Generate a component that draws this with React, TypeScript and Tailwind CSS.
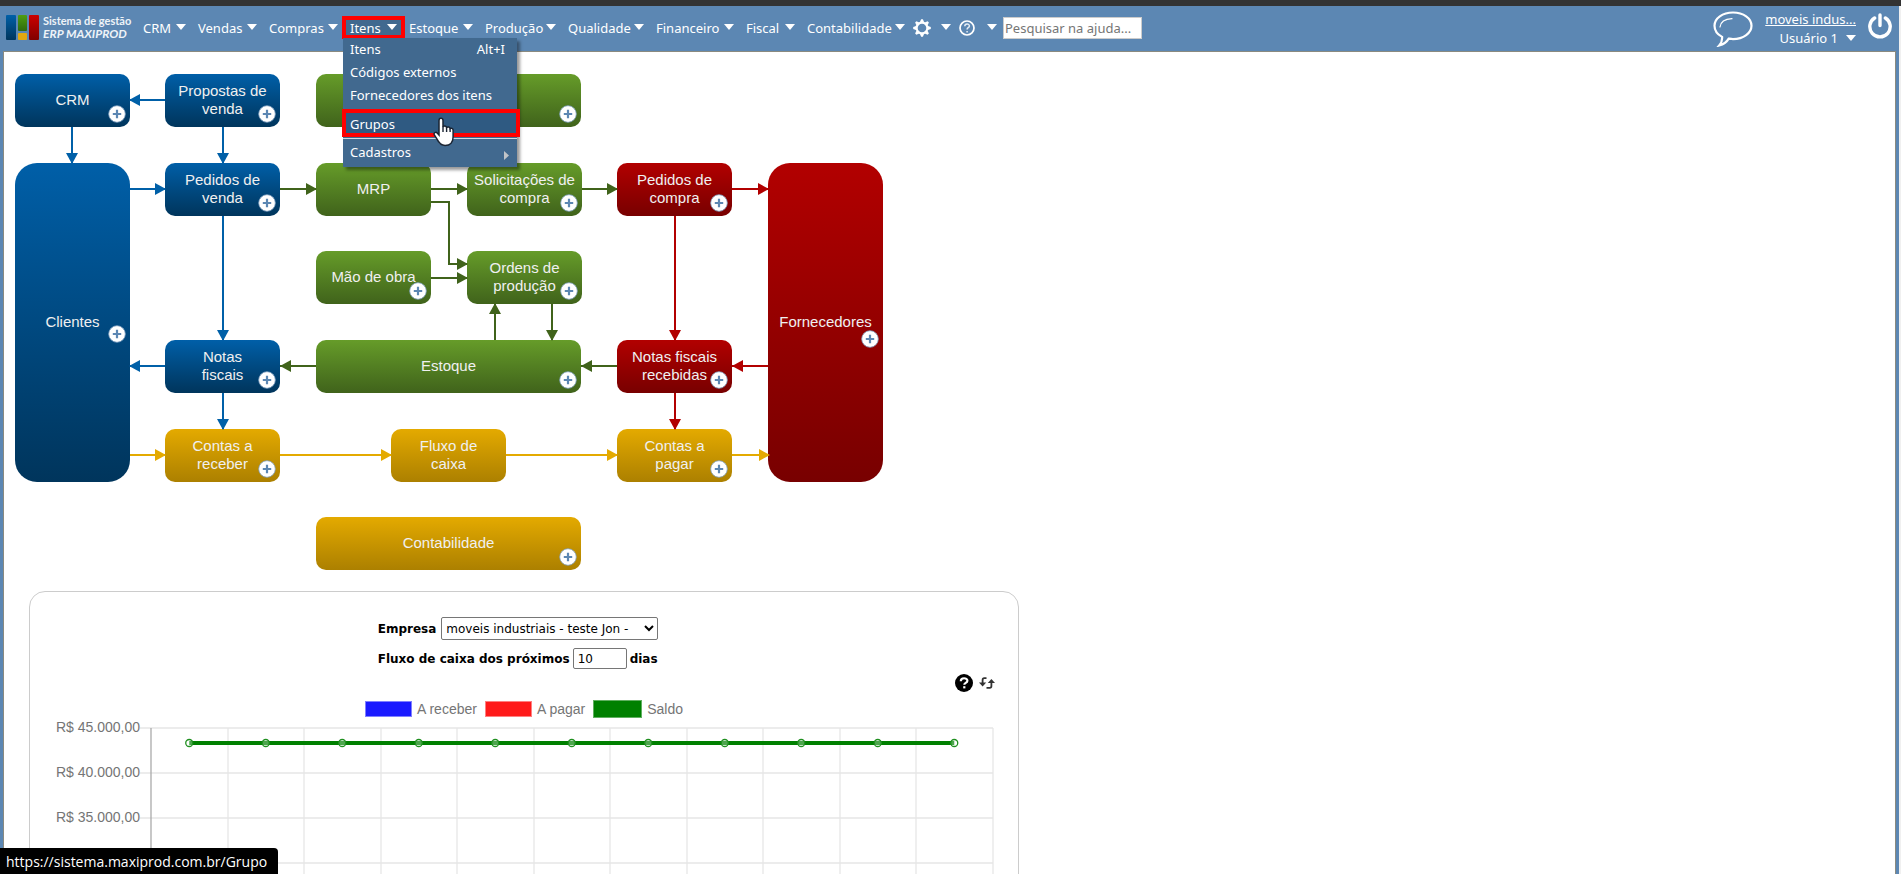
import { useState } from "react";
import clsx from "clsx";

type Tone = "blue" | "green" | "red" | "yellow";

const tones: Record<Tone, string> = {
  blue: "from-[#005fa8] to-[#00355c]",
  green: "from-[#669c29] to-[#40631b]",
  red: "from-[#b20000] to-[#780000]",
  yellow: "from-[#e4aa00] to-[#ac8000]",
};

const lines: Record<Tone, string> = {
  blue: "#0060a8",
  green: "#40631b",
  red: "#b20000",
  yellow: "#e4aa00",
};

const menus = [
  { label: "CRM", width: "w-[43px]" },
  { label: "Vendas", width: "w-[59px]" },
  { label: "Compras", width: "w-[69px]" },
  { label: "Itens", width: "w-[47px]" },
  { label: "Estoque", width: "w-[64px]" },
  { label: "Produção", width: "w-[71px]" },
  { label: "Qualidade", width: "w-[76px]" },
  { label: "Financeiro", width: "w-[78px]" },
  { label: "Fiscal", width: "w-[49px]" },
  { label: "Contabilidade", width: "w-[98px]" },
];

type FlowNode = {
  label: string[];
  tone: Tone;
  x: number;
  y: number;
  w?: number;
  h?: number;
  plus?: boolean;
};

const nodes: FlowNode[] = [
  { label: ["CRM"], tone: "blue", x: 11, y: 22, plus: true },
  { label: ["Propostas de", "venda"], tone: "blue", x: 161, y: 22, plus: true },
  { label: [], tone: "green", x: 312, y: 22, w: 265, plus: true },
  { label: ["Clientes"], tone: "blue", x: 11, y: 111, h: 319, plus: true },
  { label: ["Pedidos de", "venda"], tone: "blue", x: 161, y: 111, plus: true },
  { label: ["MRP"], tone: "green", x: 312, y: 111 },
  { label: ["Solicitações de", "compra"], tone: "green", x: 463, y: 111, plus: true },
  { label: ["Pedidos de", "compra"], tone: "red", x: 613, y: 111, plus: true },
  { label: ["Fornecedores"], tone: "red", x: 764, y: 111, h: 319, plus: true },
  { label: ["Mão de obra"], tone: "green", x: 312, y: 199, plus: true },
  { label: ["Ordens de", "produção"], tone: "green", x: 463, y: 199, plus: true },
  { label: ["Notas", "fiscais"], tone: "blue", x: 161, y: 288, plus: true },
  { label: ["Estoque"], tone: "green", x: 312, y: 288, w: 265, plus: true },
  { label: ["Notas fiscais", "recebidas"], tone: "red", x: 613, y: 288, plus: true },
  { label: ["Contas a", "receber"], tone: "yellow", x: 161, y: 377, plus: true },
  { label: ["Fluxo de", "caixa"], tone: "yellow", x: 387, y: 377 },
  { label: ["Contas a", "pagar"], tone: "yellow", x: 613, y: 377, plus: true },
  { label: ["Contabilidade"], tone: "yellow", x: 312, y: 465, w: 265, plus: true },
];

type Connector = { tone: Tone; points: [number, number][] };

const connectors: Connector[] = [
  { tone: "blue", points: [[161, 48], [125, 48]] },
  { tone: "blue", points: [[68, 75], [68, 112]] },
  { tone: "blue", points: [[219, 75], [219, 112]] },
  { tone: "blue", points: [[125, 137], [162, 137]] },
  { tone: "blue", points: [[219, 164], [219, 289]] },
  { tone: "blue", points: [[161, 314], [125, 314]] },
  { tone: "blue", points: [[219, 341], [219, 378]] },
  { tone: "green", points: [[276, 137], [313, 137]] },
  { tone: "green", points: [[427, 137], [464, 137]] },
  { tone: "green", points: [[577, 137], [614, 137]] },
  { tone: "green", points: [[427, 150], [445, 150], [445, 212], [464, 212]] },
  { tone: "green", points: [[427, 226], [464, 226]] },
  { tone: "green", points: [[491, 288], [491, 251]] },
  { tone: "green", points: [[548, 252], [548, 289]] },
  { tone: "green", points: [[613, 314], [577, 314]] },
  { tone: "green", points: [[312, 314], [276, 314]] },
  { tone: "red", points: [[728, 137], [765, 137]] },
  { tone: "red", points: [[671, 164], [671, 289]] },
  { tone: "red", points: [[764, 314], [728, 314]] },
  { tone: "red", points: [[671, 341], [671, 378]] },
  { tone: "yellow", points: [[125, 403], [162, 403]] },
  { tone: "yellow", points: [[276, 403], [388, 403]] },
  { tone: "yellow", points: [[502, 403], [614, 403]] },
  { tone: "yellow", points: [[728, 403], [766, 403]] },
];

const axisLabels = ["R$ 45.000,00", "R$ 40.000,00", "R$ 35.000,00"];

export default function App() {
  return (
    <div className="flex h-screen flex-col overflow-hidden bg-[#f0f0f0] font-['Noto_Sans',sans-serif] text-xs text-black">
      <div className="h-[6px] shrink-0 bg-[#333333]" />
      <div className="mr-[2px] flex min-h-0 flex-1 flex-col bg-[#5c87b3]">
        <Header />
        <main className="mr-[3px] ml-[3px] min-h-0 flex-1 overflow-hidden border-x border-t border-[#8a8a80] bg-white">
          <FlowDiagram />
          <CashFlow />
        </main>
      </div>
      <div className="fixed bottom-0 left-0 rounded-tr bg-black pt-1 pr-[11px] pb-[2px] pl-[6px] font-['Open_Sans',sans-serif] text-sm leading-5 text-white">
        https://sistema.maxiprod.com.br/Grupo
      </div>
    </div>
  );
}

function Caret() {
  return (
    <svg width="10" height="6" viewBox="0 0 10 6" className="mb-[2px] shrink-0">
      <path d="M0 0h10L5 6z" fill="#fff" />
    </svg>
  );
}

function Header() {
  return (
    <header className="flex h-[45px] shrink-0 justify-between text-[13px] text-white">
      <div className="flex pt-[9px] pl-[6px]">
        <Logo />
        <nav className="ml-3 flex h-[25px] items-center gap-3">
          {menus.map((m) => (
            <div key={m.label} className={clsx("relative", m.width)}>
              {m.label === "Itens" && (
                <span className="absolute -top-[3px] -right-2 -bottom-[2px] -left-2 border-4 border-[#ff0000] bg-[#41698f]" />
              )}
              <button className="relative flex w-full items-center justify-between leading-[18px]">
                {m.label}
                <Caret />
              </button>
              {m.label === "Itens" && <ItensMenu />}
            </div>
          ))}
        </nav>
        <div className="ml-2 flex h-[26px] items-center gap-2">
          <button aria-label="Configurações" className="flex w-[38px] items-center justify-between">
            <GearIcon />
            <Caret />
          </button>
          <button aria-label="Ajuda" className="flex w-[38px] items-center justify-between">
            <svg width="16" height="16" viewBox="0 0 16 16">
              <circle cx="8" cy="8" r="7" fill="none" stroke="#fff" strokeWidth="1.7" />
              <path d="M5.8 6.3c0-3 4.6-2.9 4.6-.3 0 1.700-2.300 1.700-2.300 3.400M8.100 11v1.400" fill="none" stroke="#e4ecf4" strokeWidth="1.500" />
            </svg>
            <Caret />
          </button>
        </div>
        <input
          type="text"
          aria-label="Pesquisar na ajuda"
          placeholder="Pesquisar na ajuda..."
          className="mt-[2px] ml-[6px] h-[22px] w-[139px] border border-[#cccccc] bg-white px-px text-black placeholder:text-[#757575]"
        />
      </div>
      <div className="flex pr-[7px]">
        <svg width="40" height="36" viewBox="0 0 40 36" className="mt-[5px] mr-3">
          <path
            d="M20 1.500C9.500 1.500 1.500 7.500 1.500 14.700c0 4.800 3.200 8.800 7.600 11.200.3 3.300-.8 6.200-2.900 8.600 4.400-1.200 7.600-3.600 9.500-6.900 1.300.2 2.900.5 4.300.5 10.500 0 18.500-6.200 18.500-13.400S30.500 1.500 20 1.500z"
            fill="none"
            stroke="#fff"
            strokeWidth="2.200"
          />
          <path d="M7 16c.5-4.500 4.500-7.800 12-8.300" fill="none" stroke="#fff" strokeWidth="1.200" strokeLinecap="round" />
        </svg>
        <div className="flex flex-col items-end pt-[4px]">
          <a href="#empresa" className="leading-[19px] underline">
            moveis indus...
          </a>
          <button className="flex items-center gap-2 leading-[19px]">
            Usuário 1 <Caret />
          </button>
        </div>
        <button aria-label="Sair" className="mt-[7px] ml-3 h-[26px]">
          <svg width="24" height="26" viewBox="0 0 24 26">
            <path d="M6.600 5A10.200 10.200 0 1 0 17.400 5M12 2v10.500" fill="none" stroke="#fff" strokeWidth="3.400" strokeLinecap="round" />
          </svg>
        </button>
      </div>
    </header>
  );
}

function Logo() {
  return (
    <a href="#inicio" aria-label="ERP MAXIPROD" className="flex h-[25px] items-center gap-1 font-['Lato',sans-serif] font-bold">
      <svg width="33" height="25" viewBox="0 0 33 25">
        <defs>
          <linearGradient id="lb" x2="0" y2="1">
            <stop stopColor="#0060a8" />
            <stop offset="1" stopColor="#00355c" />
          </linearGradient>
          <linearGradient id="lg" x2="0" y2="1">
            <stop stopColor="#4f9e10" />
            <stop offset="1" stopColor="#2f6a10" />
          </linearGradient>
          <linearGradient id="lr" x2="0" y2="1">
            <stop stopColor="#cc0000" />
            <stop offset="1" stopColor="#800000" />
          </linearGradient>
        </defs>
        <rect width="10" height="25" rx="1" fill="url(#lb)" />
        <rect x="12" width="9" height="16" rx="1" fill="url(#lg)" />
        <rect x="12" y="18" width="9" height="7" rx="1" fill="#e0a810" />
        <rect x="23" width="10" height="25" rx="1" fill="url(#lr)" />
      </svg>
      <span className="flex w-[88px] flex-col whitespace-nowrap text-[#eef3f8]">
        <span className="text-[11px] leading-[12px]">Sistema de gestão</span>
        <span className="text-xs leading-[14px] italic">ERP MAXIPROD</span>
      </span>
    </a>
  );
}

function GearIcon() {
  const teeth = [0, 45, 90, 135, 180, 225, 270, 315];
  return (
    <svg width="18" height="18" viewBox="-9 -9 18 18">
      <circle r="5.400" fill="none" stroke="#fff" strokeWidth="2.200" />
      {teeth.map((a) => (
        <path key={a} d="M-2-5.900L-0.900-8.800H0.900L2-5.900z" fill="#fff" transform={`rotate(${a})`} />
      ))}
    </svg>
  );
}

function ItensMenu() {
  return (
    <div className="absolute top-[19px] -left-[7px] z-10 flex w-[174px] flex-col bg-[#41698f] pb-[1px] shadow-[3px_3px_3px_rgba(0,0,0,0.4)]">
      <MenuItem label="Itens" hint="Alt+I" />
      <MenuItem label="Códigos externos" />
      <MenuItem label="Fornecedores dos itens" />
      <div className="relative -mx-px mt-[2px] flex h-[28px] w-[178px] border-4 border-[#ff0000] bg-[#2f5a82]">
        <a href="#grupos" className="flex flex-1 items-center pt-1 pl-1">
          Grupos
        </a>
        <HandCursor />
      </div>
      <hr className="mt-px border-t border-[#d0d8e0]" />
      <a href="#cadastros" className="flex h-[27px] items-center justify-between pt-[2px] pr-2 pl-[7px]">
        Cadastros
        <svg width="5" height="9" viewBox="0 0 5 9" className="mt-1">
          <path d="M0 0l5 4.500L0 9z" fill="#c0c4c8" />
        </svg>
      </a>
    </div>
  );
}

function MenuItem({ label, hint }: { label: string; hint?: string }) {
  return (
    <a href="#item" className="flex h-[23px] items-center justify-between pr-3 pl-[7px] leading-[18px]">
      <span>{label}</span>
      {hint && <span>{hint}</span>}
    </a>
  );
}

function HandCursor() {
  return (
    <svg width="24" height="30" viewBox="0 0 24 30" className="absolute top-1 left-[85px]">
      <path
        d="M8 18V3.500C8 .6 12 .6 12 3.500V10c.6-1.400 3.400-1.200 3.600.6 1-1.200 3.300-.7 3.500.9 1.200-.8 3 0 3 1.600V20c0 5-3 8.500-8 8.500-4.500 0-6.300-2.700-8.100-6.300l-2.800-4.500c-.9-1.900 1.700-3.200 3-1.600z"
        fill="#fff"
        stroke="#1a2433"
        strokeWidth="1.500"
      />
      <path d="M12 9.500v5.500M15.600 10.500V15M19.100 11.500V15" stroke="#1a2433" strokeWidth="1.400" />
    </svg>
  );
}

function arrowHead([[x0, y0], [x1, y1]]: [number, number][]) {
  const dx = Math.sign(x1 - x0);
  const dy = Math.sign(y1 - y0);
  const bx = x1 - dx * 11;
  const by = y1 - dy * 11;
  return `M${x1} ${y1}L${bx + dy * 6} ${by + dx * 6}L${bx - dy * 6} ${by - dx * 6}z`;
}

function FlowDiagram() {
  return (
    <div className="relative h-[539px]">
      <svg width="890" height="530" viewBox="0 0 890 530">
        {connectors.map((c, i) => (
          <polyline
            key={i}
            points={c.points.map((p) => p.join(",")).join(" ")}
            fill="none"
            stroke={lines[c.tone]}
            strokeWidth="2"
          />
        ))}
      </svg>
      {nodes.map((n, i) => (
        <FlowBox key={i} node={n} />
      ))}
      {/* heads sit above the boxes so the tips touch them */}
      <svg width="890" height="530" viewBox="0 0 890 530" className="pointer-events-none absolute top-0 left-0">
        {connectors.map((c, i) => (
          <path key={i} d={arrowHead(c.points.slice(-2))} fill={lines[c.tone]} />
        ))}
      </svg>
    </div>
  );
}

function FlowBox({ node }: { node: FlowNode }) {
  const { label, tone, x, y, w = 115, h = 53, plus } = node;
  const tall = h > 53;
  return (
    <button
      className={clsx(
        "absolute flex flex-col items-center justify-center bg-linear-to-b pb-[2px] font-['Liberation_Sans',sans-serif] text-[15px] leading-[18px] whitespace-nowrap text-[#f0f0f0]",
        tall ? "rounded-[22px]" : "rounded-[10px]",
        tones[tone],
      )}
      style={{ left: x, top: y, width: w, height: h }}
    >
      {label.map((line) => (
        <span key={line}>{line}</span>
      ))}
      {plus && (
        <svg
          width="18"
          height="18"
          viewBox="0 0 18 18"
          className={clsx(
            "absolute right-[4px]",
            !tall && "bottom-[4px]",
            tall && (tone === "red" ? "top-[167px]" : "top-[162px]"),
          )}
        >
          <circle cx="9" cy="9" r="8.300" fill="#fff" stroke="#7f9fc0" strokeWidth="0.800" />
          <path d="M9 4.800v8.400M4.800 9h8.400" stroke="#5c87b3" strokeWidth="2.200" />
        </svg>
      )}
    </button>
  );
}

function CashFlow() {
  const [days, setDays] = useState("10");
  return (
    <section className="ml-[25px] w-[990px] rounded-t-2xl border border-[#cccccc] pt-[25px] font-['DejaVu_Sans',sans-serif]">
      <div className="flex justify-center pr-3">
        <div className="flex flex-col gap-2 font-bold">
          <div className="flex items-center gap-[5px]">
            <label htmlFor="empresa">Empresa</label>
            <select
              id="empresa"
              className="h-[23px] w-[217px] rounded-[2px] border border-[#767676] bg-white font-normal"
            >
              <option>moveis industriais - teste Jon -</option>
            </select>
          </div>
          <div className="flex items-center gap-[3px]">
            <label htmlFor="dias">Fluxo de caixa dos próximos</label>
            <input
              id="dias"
              value={days}
              onChange={(e) => setDays(e.target.value)}
              className="h-[21px] w-[54px] rounded-[2px] border border-[#767676] px-1 font-normal"
            />
            <span>dias</span>
          </div>
        </div>
      </div>
      <div className="mt-[5px] flex items-center justify-end gap-[6px] pr-[23px]">
        <button aria-label="Ajuda">
          <svg width="18" height="18" viewBox="0 0 18 18" className="block">
            <circle cx="9" cy="9" r="9" fill="#000" />
            <path d="M5.800 7.200c0-4 6.600-3.700 6.600-.4 0 2.200-3.100 2-3.100 4" fill="none" stroke="#fff" strokeWidth="2.200" />
            <path d="M8.200 12.200h2.200v2.200H8.200z" fill="#fff" />
          </svg>
        </button>
        <button aria-label="Atualizar">
          <svg width="16" height="12" viewBox="0 0 16 12" className="block">
            <path d="M7.500 1.200H5.200Q3.600 1.200 3.600 3v3" fill="none" stroke="#333" strokeWidth="1.800" />
            <path d="M0 5.500h7.200L3.600 9.500z" fill="#333" />
            <path d="M7.500 10.800h3.300q1.600 0 1.600-1.800V6" fill="none" stroke="#333" strokeWidth="1.800" />
            <path d="M8.800 6H16l-3.600-4z" fill="#333" />
          </svg>
        </button>
      </div>
      <div className="mt-2 flex h-[18px] items-center justify-center gap-2 font-['Liberation_Sans',sans-serif] text-sm text-[#757575]">
        <span className="flex items-center gap-[5px]">
          <span className="h-[16px] w-[47px] border border-[#8080ff] bg-[#1a1aff]" />A receber
        </span>
        <span className="flex items-center gap-[5px]">
          <span className="h-[16px] w-[47px] border border-[#ff8080] bg-[#ff1a1a]" />A pagar
        </span>
        <span className="flex items-center gap-[5px]">
          <span className="h-[18px] w-[49px] border border-[#60b060] bg-[#008000]" />
          Saldo
        </span>
      </div>
      <BalanceChart />
    </section>
  );
}

function BalanceChart() {
  const left = 121;
  const top = 10;
  const stepX = 76.5;
  const stepY = 45;
  const cols = Array.from({ length: 12 }, (_, i) => Math.round(left + i * stepX));
  const rows = Array.from({ length: 6 }, (_, i) => top + i * stepY);
  const right = cols[11];
  const points = Array.from({ length: 11 }, (_, i) => left + (i + 0.5) * stepX);
  return (
    <svg width="988" height="260" viewBox="0 0 988 260" className="block" fontFamily="'Liberation Sans', sans-serif">
      {rows.map((y) => (
        <path key={y} d={`M${left - 11} ${y}H${right}`} stroke="#e6e6e6" strokeWidth="1.300" />
      ))}
      {axisLabels.map((label, i) => (
        <text key={label} x={left - 11} y={rows[i] + 4} textAnchor="end" fontSize="14" fill="#757575">
          {label}
        </text>
      ))}
      {cols.map((x, i) => (
        <path key={x} d={`M${x} ${top}V260`} stroke={i === 0 ? "#aaaaaa" : "#e6e6e6"} strokeWidth="1.300" />
      ))}
      <path d={`M${points[0]} 25H${points[10]}`} stroke="#008000" strokeWidth="4" />
      {points.map((x) => (
        <circle key={x} cx={x} cy="25" r="3.500" fill="#ffffff" fillOpacity="0.300" stroke="#1f8f1f" strokeWidth="1.300" />
      ))}
    </svg>
  );
}
